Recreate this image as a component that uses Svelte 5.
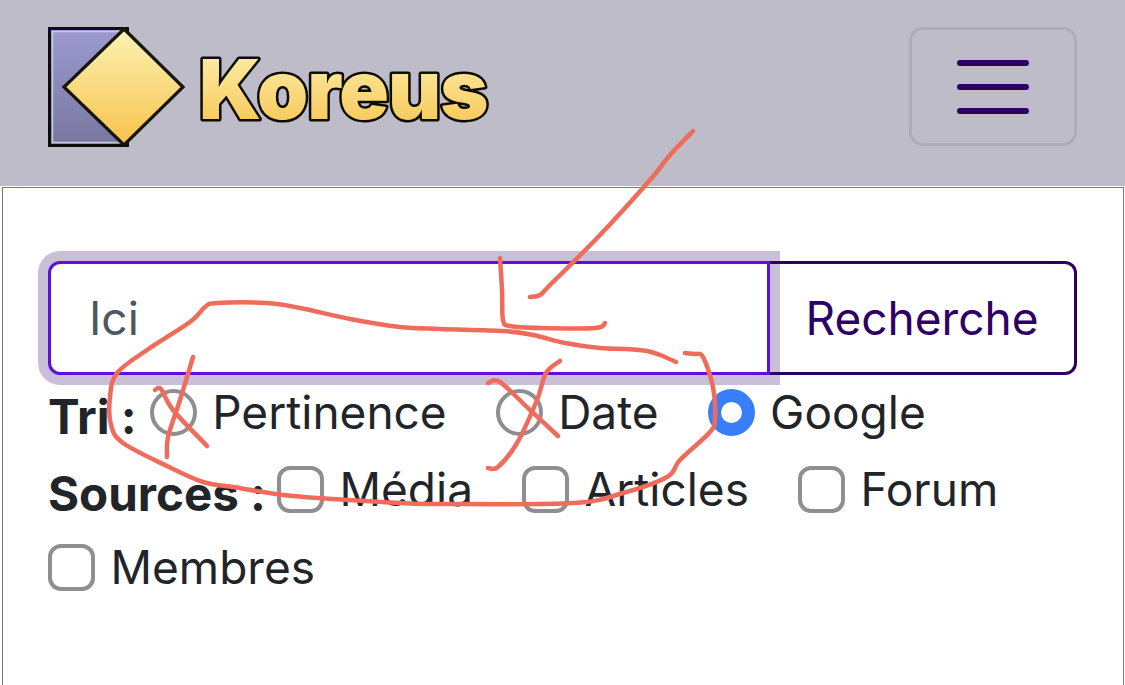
<script>
  const sorts = [
    { label: 'Pertinence', checked: false },
    { label: 'Date', checked: false },
    { label: 'Google', checked: true }
  ];
  const sources = ['Média', 'Articles', 'Forum', 'Membres'];

  const lines = [
    [[676,362],[660,355],[647,351],[625,349],[600,348],[565,343],[533,335],[503,331],[440,329],[400,327],[350,319],[300,308],[267,303],[217,303],[205,307],[190,322],[147,350],[117,373],[110,397],[111,425],[123,443],[167,466],[203,482],[233,487],[283,495],[333,499],[400,503],[440,504],[573,503],[623,493],[667,477],[680,460],[710,432],[715,418],[713,387],[703,357],[695,354],[685,353]],
    [[693,131],[670,155],[650,180],[600,235],[550,285],[540,295],[530,297]],
    [[500,258],[502,290],[503,320],[510,326],[540,328],[595,328],[605,323]],
    [[193,357],[180,400],[168,437],[167,457]],
    [[155,390],[161,389],[173,410],[207,446]],
    [[560,361],[546,373],[537,400],[517,443],[498,467],[488,468]],
    [[488,383],[500,382],[530,410],[558,436]]
  ];

  function smooth(pts) {
    let d = `M${pts[0][0]} ${pts[0][1]}`;
    for (let i = 0; i < pts.length - 1; i++) {
      const a = pts[Math.max(i - 1, 0)];
      const b = pts[i];
      const c = pts[i + 1];
      const e = pts[Math.min(i + 2, pts.length - 1)];
      const c1x = b[0] + (c[0] - a[0]) / 6;
      const c1y = b[1] + (c[1] - a[1]) / 6;
      const c2x = c[0] - (e[0] - b[0]) / 6;
      const c2y = c[1] - (e[1] - b[1]) / 6;
      d += ` C${c1x} ${c1y} ${c2x} ${c2y} ${c[0]} ${c[1]}`;
    }
    return d;
  }
  const strokes = lines.map(smooth);
</script>

<header class="top">
  <svg class="logo" width="460" height="122" viewBox="0 0 460 122" role="img" aria-label="Koreus">
    <defs>
      <linearGradient id="side" x1="0" y1="0" x2="0" y2="1">
        <stop offset="0" stop-color="#9c9ad0" />
        <stop offset="1" stop-color="#78769f" />
      </linearGradient>
      <linearGradient id="gold" x1="0" y1="0" x2="0" y2="1">
        <stop offset="0" stop-color="#fbf3b4" />
        <stop offset="1" stop-color="#f8c24a" />
      </linearGradient>
      <filter id="soft"><feGaussianBlur stdDeviation="0.75" /></filter>
    </defs>
    <g filter="url(#soft)">
      <rect x="1.5" y="1.5" width="78" height="117" fill="url(#side)" stroke="#0c0c10" stroke-width="3" />
      <rect x="4.5" y="4.5" width="72" height="111" fill="none" stroke="#c9c8d8" stroke-width="1.5" />
      <path d="M76 2 L135 60 L76 118 L16 60 Z" fill="url(#gold)" stroke="#16140f" stroke-width="3.2" stroke-linejoin="miter" />
      <text class="word" x="151" y="92" fill="url(#gold)">Koreus</text>
    </g>
  </svg>
  <button class="toggler" type="button" aria-label="Menu">
    <svg width="72" height="54" viewBox="0 0 72 54">
      <path d="M3 3H69M3 27H69M3 51H69" stroke="#2d0066" stroke-width="6" stroke-linecap="round" />
    </svg>
  </button>
</header>

<main class="card">
  <form class="search">
    <input class="query" type="text" placeholder="Ici" />
    <button class="submit" type="button">Recherche</button>
  </form>

  <div class="filters">
    <span class="label">Tri :</span>
    {#each sorts as s}
      <label class="opt">
        <input type="radio" name="sort" checked={s.checked} />
        <span>{s.label}</span>
      </label>
    {/each}
  </div>

  <div class="filters second">
    <span class="label tight">Sources :</span>
    {#each sources as s}
      <label class="opt">
        <input type="checkbox" />
        <span>{s}</span>
      </label>
    {/each}
  </div>
</main>

<svg class="scribble" width="1125" height="685" viewBox="0 0 1125 685" aria-hidden="true">
  {#each strokes as d}
    <path {d} />
  {/each}
</svg>

<style>
  :global(body) {
    margin: 0;
    background: #fff;
    overflow: hidden;
    font-family: Inter, "Liberation Sans", sans-serif;
    color: #212529;
  }
  .top {
    height: 186px;
    box-sizing: border-box;
    background: #bebcc8;
    display: flex;
    justify-content: space-between;
    align-items: flex-start;
    padding: 27px 48px 0;
  }
  .logo { display: block; }
  .word {
    font-family: Inter, "Liberation Sans", sans-serif;
    font-weight: 900;
    font-size: 82px;
    letter-spacing: -1px;
    stroke: #0a0906;
    stroke-width: 5px;
    paint-order: stroke;
    stroke-linejoin: round;
  }
  .toggler {
    width: 168px;
    height: 119px;
    box-sizing: border-box;
    background: transparent;
    border: 3px solid #aeacb9;
    border-radius: 14px;
    padding: 0;
    display: flex;
    align-items: center;
    justify-content: center;
  }
  .toggler svg { display: block; }
  .card {
    margin: 1px 1px 0 1.5px;
    border: 1px solid #77749a;
    border-bottom: 0;
    height: 498px;
    box-sizing: border-box;
    padding: 73px 46px 0 45.5px;
    background: #fff;
  }
  .search {
    display: flex;
    height: 114px;
  }
  .query {
    width: 722px;
    box-sizing: border-box;
    border: 3px solid #5f0fdc;
    border-radius: 12px 0 0 12px;
    box-shadow: 0 0 0 10px #c9bfd9;
    outline: 0;
    padding: 0 38px;
    font: 400 46px Inter, "Liberation Sans", sans-serif;
    background: #fff;
  }
  .query::placeholder { color: #4f565e; opacity: 1; }
  .submit {
    flex: 1;
    position: relative;
    border: 3px solid #2d0066;
    border-left: 0;
    border-radius: 0 12px 12px 0;
    background: transparent;
    color: #2d0066;
    font: 400 46px Inter, "Liberation Sans", sans-serif;
    padding: 0;
  }
  .filters {
    display: flex;
    flex-wrap: wrap;
    align-items: flex-start;
    font-size: 46px;
    line-height: 65px;
    column-gap: 49px;
    row-gap: 4px;
  }
  .second { margin-top: 3px; }
  .label {
    font-weight: 700;
    font-size: 47.5px;
    padding-top: 9px;
    margin-right: -36px;
  }
  .label.tight { margin-right: -38px; }
  .opt {
    display: flex;
    align-items: center;
    gap: 15.5px;
    height: 74px;
  }
  .opt input {
    appearance: none;
    width: 47px;
    height: 47px;
    margin: 0;
    flex: none;
    box-sizing: border-box;
    border: 4px solid #8e8e93;
    background: #fff;
  }
  .opt input[type="radio"] { border-radius: 50%; }
  .opt input[type="checkbox"] { border-radius: 13px; }
  .opt input[type="radio"]:checked {
    border: 13px solid #387ef8;
  }
  .scribble {
    position: absolute;
    left: 0;
    top: 0;
    z-index: 2;
    pointer-events: none;
  }
  .scribble path {
    fill: none;
    stroke: #ef6b5b;
    stroke-width: 4.5px;
    stroke-linecap: round;
    stroke-linejoin: round;
  }
</style>
